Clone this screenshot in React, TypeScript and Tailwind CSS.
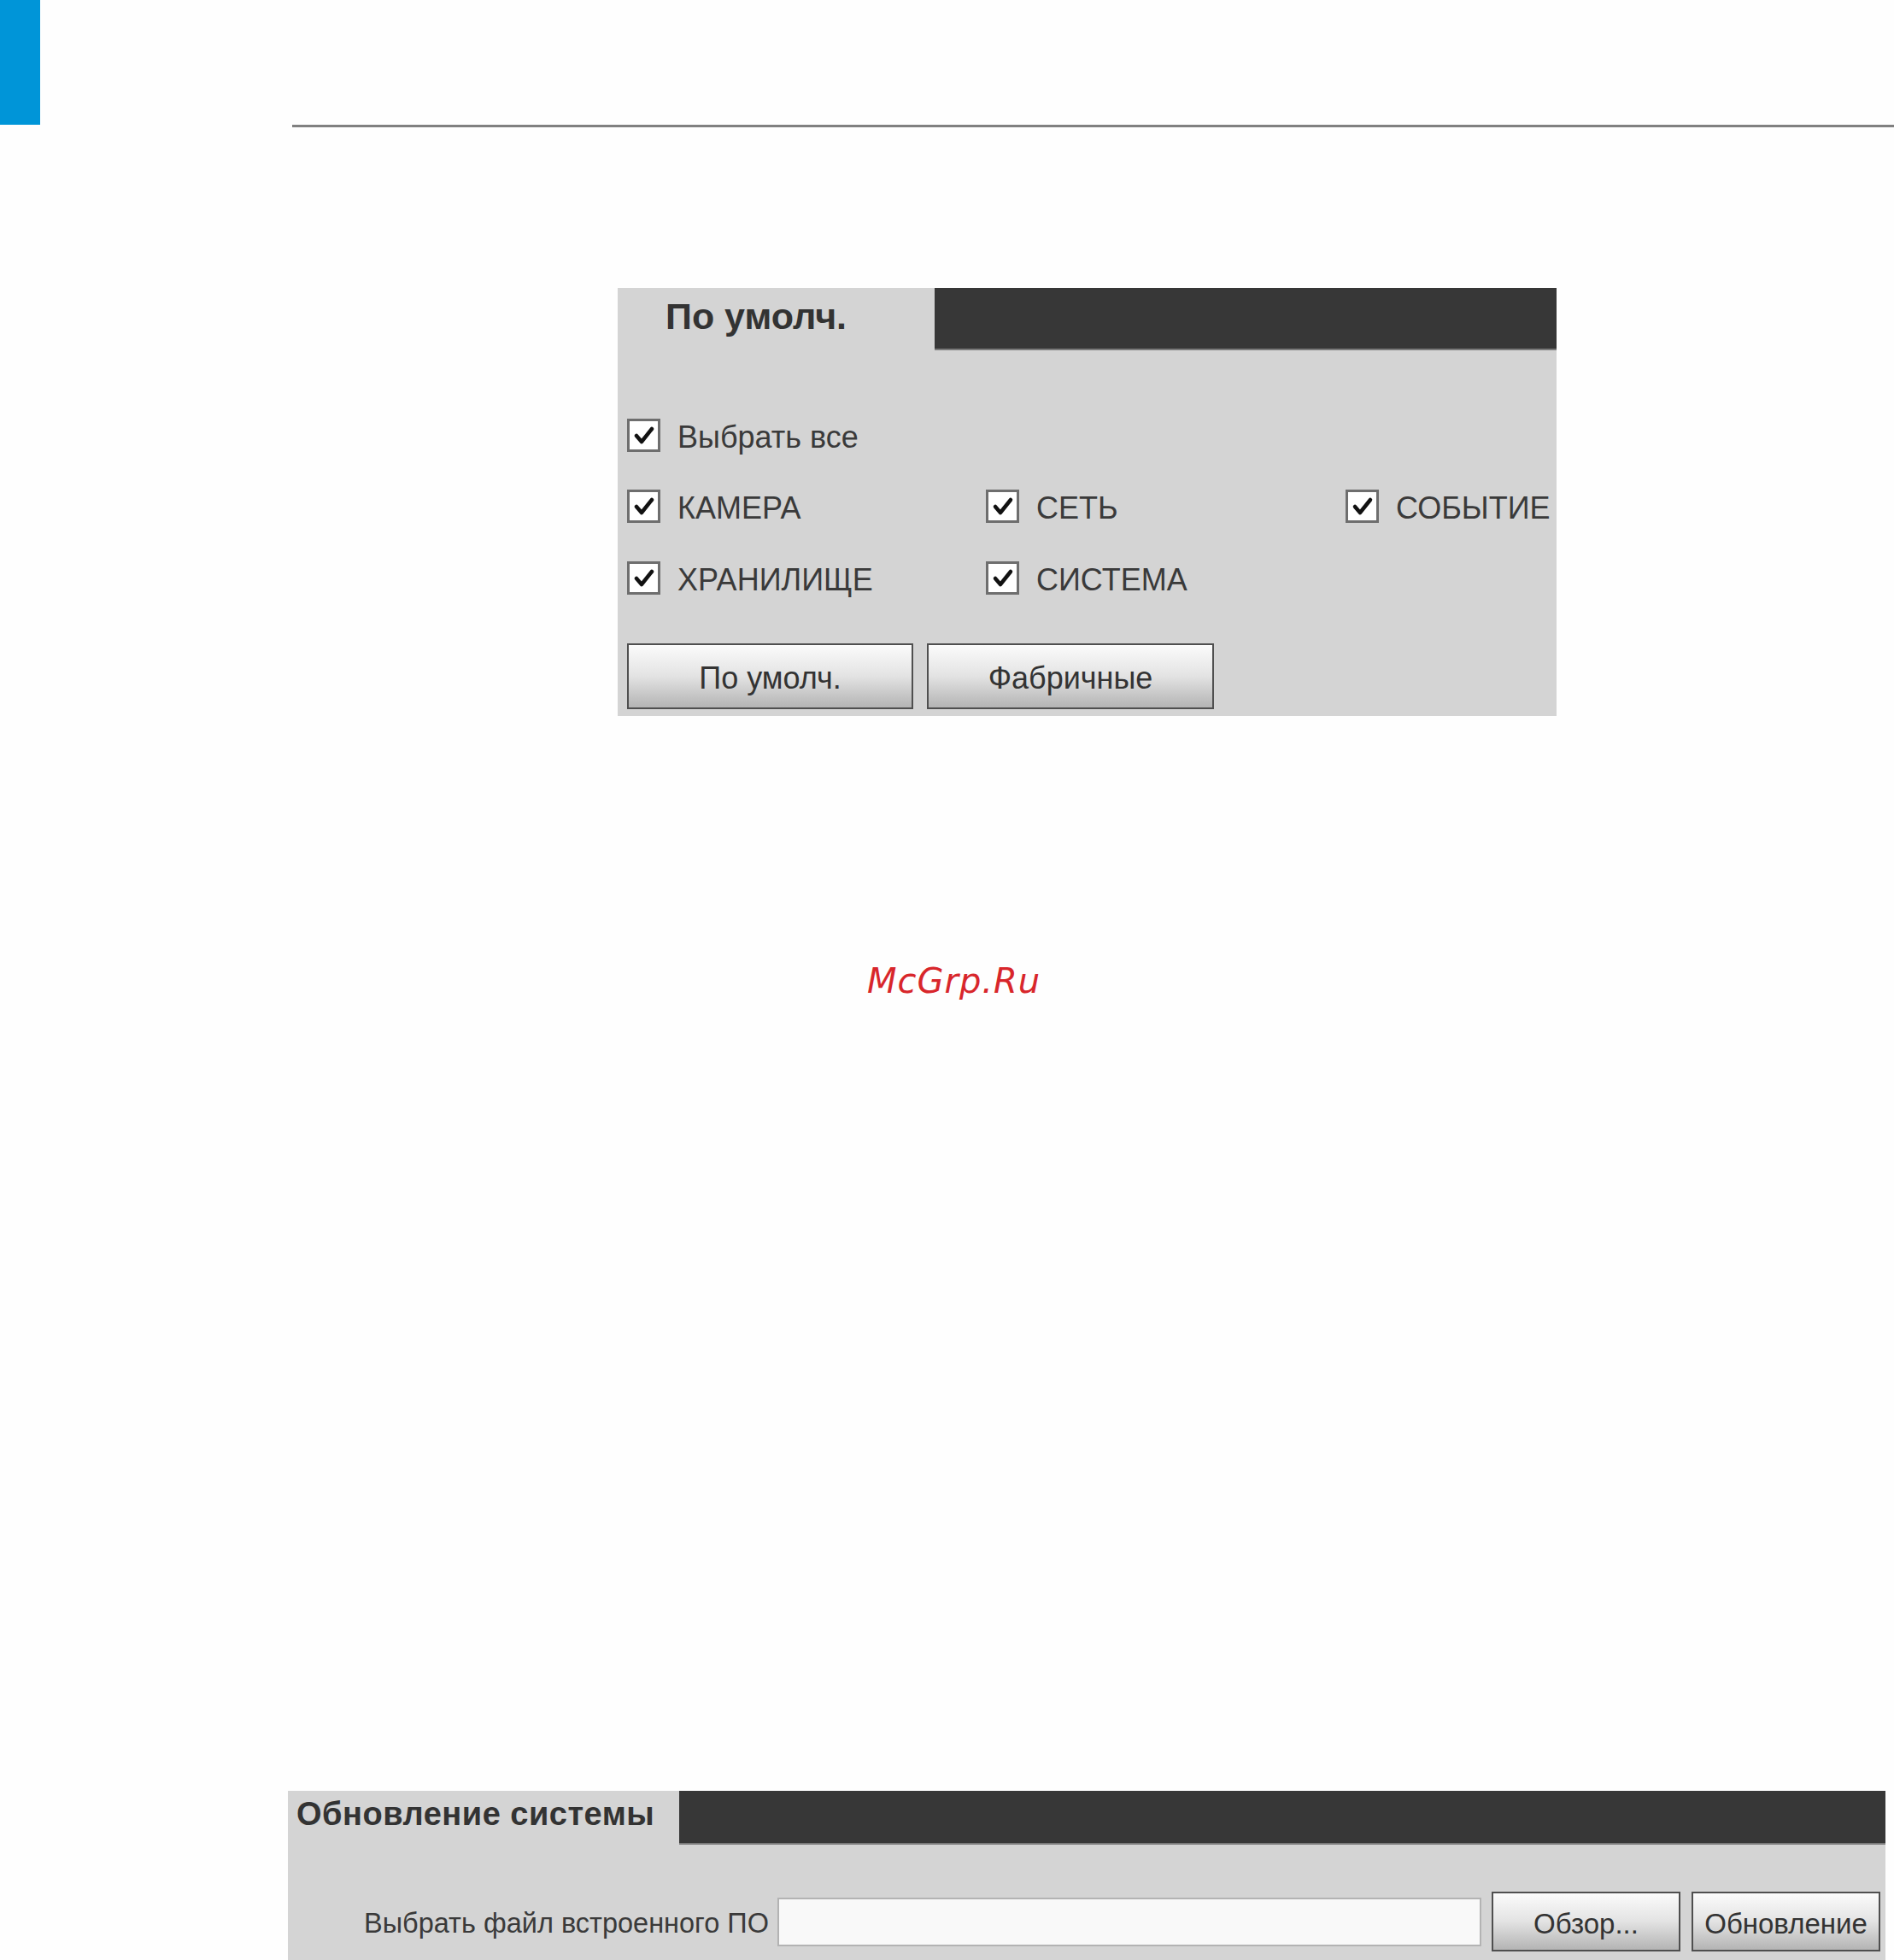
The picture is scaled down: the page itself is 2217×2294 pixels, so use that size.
import React from "react";

const ui = "font-['Liberation_Sans',Arial,sans-serif]";

function Check({ label }: { label: string }) {
  return (
    <div className="flex items-center h-[39px]">
      <div className="w-[39px] h-[39px] border-[3px] border-[#6e6e6e] bg-white flex items-center justify-center shrink-0">
        <svg width="28" height="28" viewBox="0 0 28 28">
          <path d="M5 14 L11 21 L23 6" fill="none" stroke="#111" strokeWidth="4.5" strokeLinecap="round" strokeLinejoin="round" />
        </svg>
      </div>
      <span className="ml-[20px] mt-[4px] text-[36px] leading-none text-[#3a3a3a] whitespace-nowrap">{label}</span>
    </div>
  );
}

function GrayButton({ label, className }: { label: string; className: string }) {
  return (
    <button
      className={`border-2 border-[#4f4f4f] bg-gradient-to-b from-[#fbfbfb] via-[#e3e3e3] to-[#b4b4b4] text-[#333] leading-none ${className}`}
    >
      {label}
    </button>
  );
}

export default function App() {
  return (
    <div className={`w-[2217px] h-[2294px] bg-[#fefefe] overflow-hidden flex flex-col ${ui}`}>
      {/* top marker + rule */}
      <div className="w-[47px] h-[146px] bg-[#0095d8]" />
      <div className="ml-[342px] h-[3px] bg-[#808080]" />

      {/* defaults panel */}
      <div className="ml-[723px] mt-[188px] w-[1099px] h-[501px] bg-[#d4d4d4] flex flex-col">
        <div className="flex h-[73px]">
          <div className="w-[371px] pl-[56px] pt-[12px]">
            <span className="block text-[43px] leading-none font-bold text-[#333]">По умолч.</span>
          </div>
          <div className="flex-1 bg-[#373737] border-b-2 border-[#7a7a7a]" />
        </div>

        <div className="pl-[11px]">
          <div className="mt-[80px]">
            <Check label="Выбрать все" />
          </div>
          <div className="mt-[44px] grid grid-cols-[420px_421px_1fr]">
            <Check label="КАМЕРА" />
            <Check label="СЕТЬ" />
            <Check label="СОБЫТИЕ" />
          </div>
          <div className="mt-[45px] grid grid-cols-[420px_421px_1fr]">
            <Check label="ХРАНИЛИЩЕ" />
            <Check label="СИСТЕМА" />
          </div>
          <div className="mt-[57px] flex gap-[16px]">
            <GrayButton label="По умолч." className="w-[335px] h-[77px] text-[36px] pt-[4px]" />
            <GrayButton label="Фабричные" className="w-[336px] h-[77px] text-[36px] pt-[4px]" />
          </div>
        </div>
      </div>

      {/* watermark */}
      <div className="ml-[1015px] mt-[290px] h-[40px] text-[40px] leading-none italic text-[#d8262b] tracking-[1px] font-['DejaVu_Sans',sans-serif]">
        McGrp.Ru
      </div>

      {/* system update panel */}
      <div className="ml-[337px] mt-[928px] w-[1870px] flex-1 bg-[#d4d4d4] flex flex-col">
        <div className="flex h-[63px]">
          <div className="w-[458px] pl-[10px] pt-[8px]">
            <span className="block text-[38px] leading-none font-bold text-[#333] tracking-[0.5px]">Обновление системы</span>
          </div>
          <div className="flex-1 bg-[#373737] border-b-2 border-[#7a7a7a]" />
        </div>
        <div className="mt-[55px] flex items-center">
          <div className="w-[563px] pt-[4px] text-right text-[32.5px] leading-none text-[#3a3a3a] whitespace-nowrap">
            Выбрать файл встроенного ПО
          </div>
          <div className="ml-[10px] w-[824px] h-[57px] bg-[#f9f9f9] border-2 border-[#b3b3b3]" />
          <GrayButton label="Обзор..." className="ml-[12px] w-[221px] h-[70px] text-[33px] pt-[4px]" />
          <GrayButton label="Обновление" className="ml-[13px] w-[221px] h-[70px] text-[33px] pt-[4px]" />
        </div>
      </div>
    </div>
  );
}
